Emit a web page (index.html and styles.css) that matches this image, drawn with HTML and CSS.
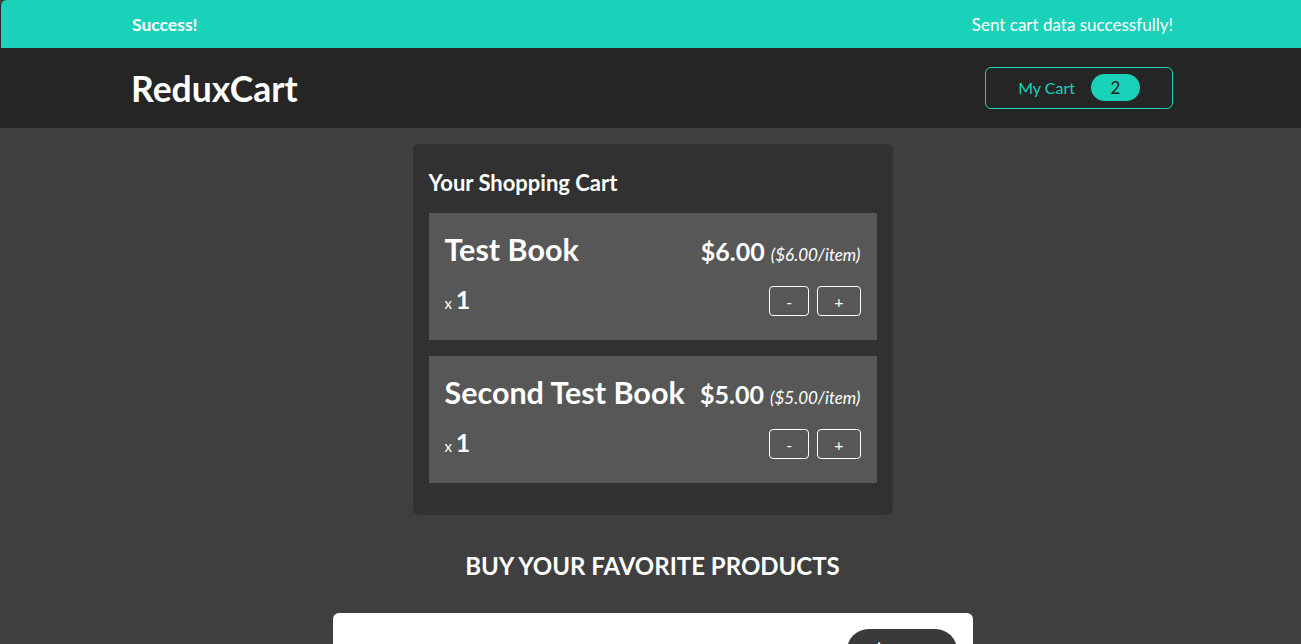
FILE: index.html
```html
<!DOCTYPE html>
<html lang="en">
<head>
<meta charset="utf-8">
<title>ReduxCart</title>
<link rel="stylesheet" href="styles.css">
</head>
<body>
<section class="notification">
  <h2 class="note-title">Success!</h2>
  <p class="note-msg">Sent cart data successfully!</p>
</section>
<header class="header">
  <h1 class="logo">ReduxCart</h1>
  <button class="cart-button"><span>My Cart</span><span class="badge">2</span></button>
</header>
<main class="main">
  <section class="cart">
    <h2 class="cart-title">Your Shopping Cart</h2>
    <ul class="cart-list">
      <li class="item">
        <header class="item-header">
          <h3 class="item-title">Test Book</h3>
          <div class="price">$6.00 <span class="itemprice">($6.00/item)</span></div>
        </header>
        <div class="details">
          <div class="quantity">x <span class="qty-num">1</span></div>
          <div class="actions">
            <button class="act-btn">-</button>
            <button class="act-btn">+</button>
          </div>
        </div>
      </li>
      <li class="item">
        <header class="item-header">
          <h3 class="item-title">Second Test Book</h3>
          <div class="price">$5.00 <span class="itemprice">($5.00/item)</span></div>
        </header>
        <div class="details">
          <div class="quantity">x <span class="qty-num">1</span></div>
          <div class="actions">
            <button class="act-btn">-</button>
            <button class="act-btn">+</button>
          </div>
        </div>
      </li>
    </ul>
  </section>
  <section class="products">
    <h2 class="products-title">Buy your favorite products</h2>
    <ul class="product-list">
      <li class="product-card">
        <header class="product-header">
          <h3 class="product-title">Test Book</h3>
          <div class="product-price">$6.00</div>
        </header>
      </li>
    </ul>
  </section>
</main>
</body>
</html>
```

FILE: styles.css
```css
* { box-sizing: border-box; }

html { font-family: Lato, "Noto Sans", sans-serif; }

body {
  margin: 0;
  background-color: #3f3f3f;
  color: #ffffff;
}

.notification {
  width: 100%;
  height: 48px;
  background-color: #1ad1b9;
  display: flex;
  justify-content: space-between;
  align-items: center;
  padding: 0 128px 0 131px;
  border-top-left-radius: 6px;
  border-left: 1px solid #2c2c2c;
}

.note-title {
  margin: 0;
  font-size: 17.5px;
  font-weight: 700;
}

.note-msg {
  margin: 0;
  font-size: 17px;
}

.header {
  height: 80px;
  background-color: #252525;
  display: flex;
  justify-content: space-between;
  align-items: center;
  padding: 0 128px 0 131px;
}

.logo {
  margin: 0;
  font-size: 35.5px;
  font-weight: 700;
  color: #ffffff;
}

.cart-button {
  display: flex;
  align-items: center;
  gap: 16px;
  height: 42px;
  margin-top: -1px;
  padding: 0 32px 0 32px;
  white-space: nowrap;
  background: transparent;
  border: 1px solid #1ad1b9;
  border-radius: 6px;
  color: #1ad1b9;
  font-family: inherit;
  font-size: 16px;
}

.badge {
  display: inline-flex;
  justify-content: center;
  align-items: center;
  width: 49px;
  height: 27px;
  border-radius: 30px;
  background-color: #1ad1b9;
  color: #1d1d1d;
  font-size: 17px;
}

.main {
  padding-left: 4px;
}

.cart {
  width: 480px;
  margin: 16px auto 0;
  padding: 16px;
  border-radius: 6px;
  background-color: #313131;
}

.cart-title {
  margin: 8px 0 16px;
  font-size: 22px;
  line-height: 29px;
  font-weight: 700;
}

.cart-list, .product-list {
  list-style: none;
  margin: 0;
  padding: 0;
}

.item {
  background-color: #575757;
  padding: 16px;
  margin-bottom: 16px;
}

.item-header {
  display: flex;
  justify-content: space-between;
  align-items: baseline;
  height: 41px;
  margin-bottom: 8px;
}

.item-title {
  margin: 0;
  font-size: 30.5px;
  line-height: 41px;
  font-weight: 700;
}

.price {
  font-size: 25px;
  font-weight: 700;
  line-height: 41px;
}

.itemprice {
  font-size: 17px;
  font-weight: 400;
  font-style: italic;
}

.details {
  display: flex;
  justify-content: space-between;
  align-items: center;
  height: 46px;
}

.quantity {
  font-size: 15px;
  line-height: 48px;
}

.qty-num {
  font-size: 25px;
  font-weight: 700;
}

.actions {
  display: flex;
  gap: 8px;
}

.act-btn {
  height: 30px;
  padding: 0 16px;
  background: transparent;
  border: 1px solid #ffffff;
  border-radius: 4px;
  color: #ffffff;
  font-family: inherit;
  font-size: 16px;
}

.products {
  width: 640px;
  margin: 0 auto;
}

.products-title {
  margin: 32px 0;
  height: 35px;
  line-height: 38px;
  text-align: center;
  text-transform: uppercase;
  font-size: 24px;
  font-weight: 700;
}

.product-card {
  margin-top: -1px;
  background-color: #ffffff;
  border-radius: 6px;
  padding: 16px;
  color: #3a3a3a;
}

.product-header {
  display: flex;
  justify-content: space-between;
  align-items: flex-start;
}

.product-title {
  margin: 0;
  padding-top: 40px;
  font-size: 24px;
}

.product-price {
  border-radius: 30px;
  padding: 10px 24px 4px;
  background-color: #3a3a3a;
  color: #ffffff;
  font-size: 24px;
  font-weight: 700;
}
```
